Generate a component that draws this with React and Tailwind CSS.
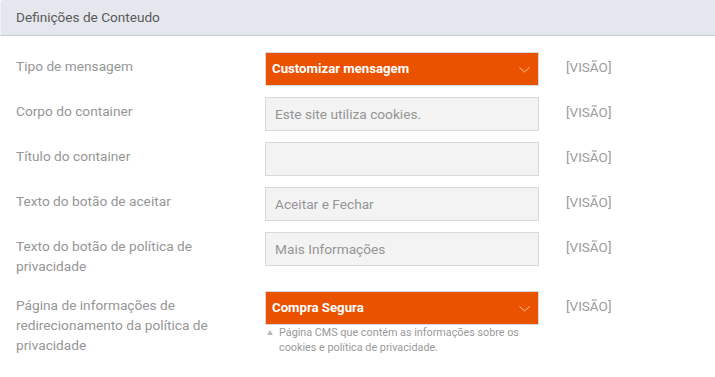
import React from 'react';

const font = { fontFamily: 'Roboto, "Liberation Sans", sans-serif' };

function Chevron() {
  return (
    <svg width="11" height="6" viewBox="0 0 11 6" fill="none" className="absolute right-[8px] top-[14px]">
      <path d="M0.5 0.5 L5.5 5 L10.5 0.5" stroke="#f7c4a2" strokeWidth="1" />
    </svg>
  );
}

function SelectBox({ value }) {
  return (
    <div className="relative h-[34px] w-[274px] border border-[#d6d9de] bg-[#eb5200] pl-[6px] text-[13.2px] font-bold leading-[32px] text-white">
      {value}
      <Chevron />
    </div>
  );
}

function InputBox({ value }) {
  return (
    <div className="h-[34px] w-[274px] border border-[#d6d9de] bg-[#f3f3f3] pl-[9px] text-[13.7px] leading-[32px] text-[#959595]">
      {value}
    </div>
  );
}

function Row({ label, children }) {
  return (
    <div className="mb-[11px] flex items-start">
      <div className="w-[265px] pl-4 pt-[4px] pb-[4px] pr-4 text-[13.7px] leading-[20px] text-[#969696]">{label}</div>
      <div className="w-[274px]">{children}</div>
      <div className="pl-[27px] pt-[5px] text-[13.5px] leading-[20px] text-[#9c9c9c]">[VISÃO]</div>
    </div>
  );
}

export default function App() {
  return (
    <div className="min-h-screen w-[715px] bg-white" style={font}>
      <div className="h-[36px] rounded-tl-[3px] border-l border-b border-l-[#eef0f3] border-b-[#c9cbce] bg-[#e4e7ed] pl-[15px] text-[13.6px] leading-[35px] text-[#5a5a5a]">
        Definições de Conteudo
      </div>
      <div className="pt-[16px]">
        <Row label="Tipo de mensagem">
          <SelectBox value="Customizar mensagem" />
        </Row>
        <Row label="Corpo do container">
          <InputBox value="Este site utiliza cookies." />
        </Row>
        <Row label="Título do container">
          <InputBox value="" />
        </Row>
        <Row label="Texto do botão de aceitar">
          <InputBox value="Aceitar e Fechar" />
        </Row>
        <Row label="Texto do botão de política de privacidade">
          <InputBox value="Mais Informações" />
        </Row>
        <Row label="Página de informações de redirecionamento da política de privacidade">
          <SelectBox value="Compra Segura" />
          <div className="flex items-start text-[10.8px] leading-[15px] text-[#999]">
            <span className="mt-[5px] ml-[2px] mr-[6px] block h-0 w-0 border-x-[3px] border-b-[5px] border-x-transparent border-b-[#b8b8b8]" />
            <span>Página CMS que contém as informações sobre os<br />cookies e política de privacidade.</span>
          </div>
        </Row>
      </div>
    </div>
  );
}
